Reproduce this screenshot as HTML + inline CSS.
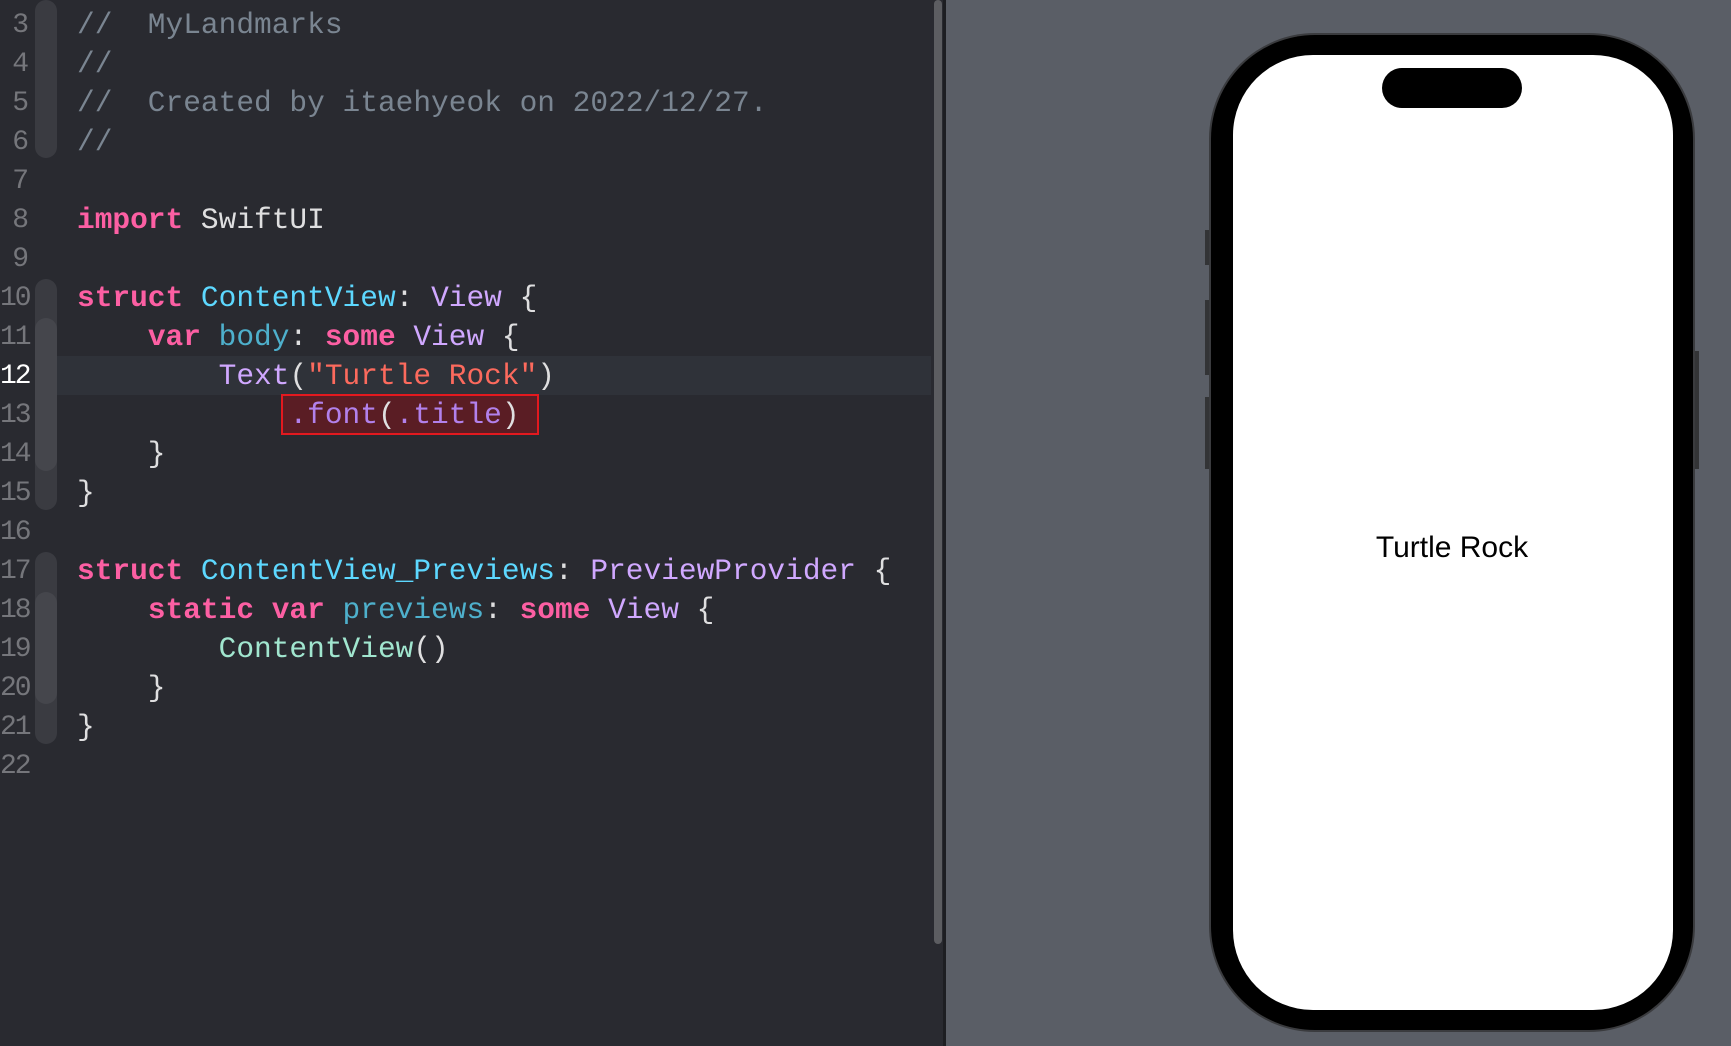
<!DOCTYPE html>
<html><head><meta charset="utf-8"><style>
*{margin:0;padding:0;box-sizing:border-box}
body{width:1731px;height:1046px;overflow:hidden;background:#292a30;position:relative;font-family:"Liberation Mono",monospace}
.ed{position:absolute;left:0;top:0;width:931px;height:1046px;background:#292a30}
.hl{position:absolute;left:53px;top:356px;width:878px;height:39px;background:#2f3239}
.rib{position:absolute;left:35px;width:22px;background:#3a3b41;border-radius:11px}
.rib2{background:#45464c}
.ln{position:absolute;left:0;width:27px;text-align:right;color:#75767b;font-size:28px;line-height:39px;letter-spacing:-2px}
.code{position:absolute;left:77px;font-size:29.5px;line-height:39px;white-space:pre;color:#dfdfe0}
.c{color:#7a8591}.k{color:#fc5fa3;font-weight:bold}.t{color:#5dd8ff}.ty{color:#d0a8ff}.p{color:#4eb0cc}.s{color:#fc6a5d}.m{color:#b281eb}.f{color:#a1e6cf}
.box{position:absolute;left:281px;top:394px;width:258px;height:41px;background:#5a1d24;border:2px solid #e3191f}
.sb{position:absolute;left:934px;top:0;width:8px;height:944px;background:#5c5d61;border-radius:4px}
.div{position:absolute;left:943px;top:0;width:3px;height:1046px;background:#1d1e22}
.rp{position:absolute;left:946px;top:0;width:785px;height:1046px;background:#5a5e66}
.ph{position:absolute;left:1211px;top:35px;width:482px;height:995px;background:#000;border-radius:104px;box-shadow:0 0 0 2px #3a3b3e}
.sc{position:absolute;left:1233px;top:55px;width:440px;height:955px;background:#fff;border-radius:80px}
.is{position:absolute;left:1382px;top:68px;width:140px;height:40px;background:#000;border-radius:20px}
.btn{position:absolute;background:#333436;width:6px}
.tr{position:absolute;left:1232px;width:440px;top:531px;text-align:center;font-family:"Liberation Sans",sans-serif;font-size:30px;color:#000}
</style></head><body>
<div class="ed"></div>
<div class="hl"></div>
<div class="rib" style="top:0;height:158px"></div>
<div class="rib" style="top:279px;height:231px"></div>
<div class="rib rib2" style="top:318px;height:153px"></div>
<div class="rib" style="top:552px;height:192px"></div>
<div class="rib rib2" style="top:592px;height:112px"></div>
<div class="ln" style="top:6px">3<br>4<br>5<br>6<br>7<br>8<br>9<br>10<br>11<br><span style="color:#fff">12</span><br>13<br>14<br>15<br>16<br>17<br>18<br>19<br>20<br>21<br>22</div>
<div class="box"></div>
<div class="code" style="top:6px"><span class="c">//  MyLandmarks</span>
<span class="c">//</span>
<span class="c">//  Created by itaehyeok on 2022/12/27.</span>
<span class="c">//</span>

<span class="k">import</span> SwiftUI

<span class="k">struct</span> <span class="t">ContentView</span>: <span class="ty">View</span> {
    <span class="k">var</span> <span class="p">body</span>: <span class="k">some</span> <span class="ty">View</span> {
        <span class="ty">Text</span>(<span class="s">"Turtle Rock"</span>)
            <span class="m">.font</span>(<span class="m">.title</span>)
    }
}

<span class="k">struct</span> <span class="t">ContentView_Previews</span>: <span class="ty">PreviewProvider</span> {
    <span class="k">static</span> <span class="k">var</span> <span class="p">previews</span>: <span class="k">some</span> <span class="ty">View</span> {
        <span class="f">ContentView</span>()
    }
}
</div>
<div class="sb"></div>
<div class="div"></div>
<div class="rp"></div>
<div class="btn" style="left:1205px;top:230px;height:35px"></div>
<div class="btn" style="left:1205px;top:300px;height:75px"></div>
<div class="btn" style="left:1205px;top:397px;height:72px"></div>
<div class="btn" style="left:1693px;top:351px;height:118px"></div>
<div class="ph"></div>
<div class="sc"></div>
<div class="is"></div>
<div class="tr">Turtle Rock</div>
</body></html>
